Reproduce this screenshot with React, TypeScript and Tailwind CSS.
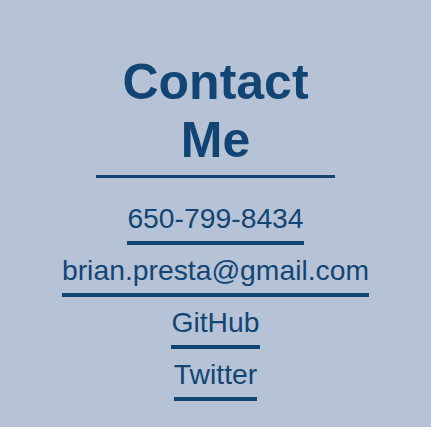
import React from 'react';

const links = [
  { label: '650-799-8434', href: 'tel:6507998434' },
  { label: 'brian.presta@gmail.com', href: 'mailto:brian.presta@gmail.com' },
  { label: 'GitHub', href: '#github' },
  { label: 'Twitter', href: '#twitter' },
];

export default function App() {
  return (
    <div
      className="min-h-screen bg-[#b6c3d6] text-[#134574] flex flex-col items-center pt-[53px]"
      style={{ fontFamily: '"Liberation Sans", Arial, sans-serif' }}
    >
      {/* Heading */}
      <h1 className="w-[239px] text-center text-[50px] font-bold leading-[normal] pb-[6px] border-b-[3px] border-[#134574]">
        Contact Me
      </h1>

      {/* Contact links */}
      <ul className="flex flex-col items-center gap-[9px] mt-[24px]">
        {links.map((link) => (
          <li key={link.label}>
            <a
              href={link.href}
              className="inline-block text-[28.3px] leading-[normal] pb-[6px] border-b-4 border-[#134574]"
            >
              {link.label}
            </a>
          </li>
        ))}
      </ul>
    </div>
  );
}
